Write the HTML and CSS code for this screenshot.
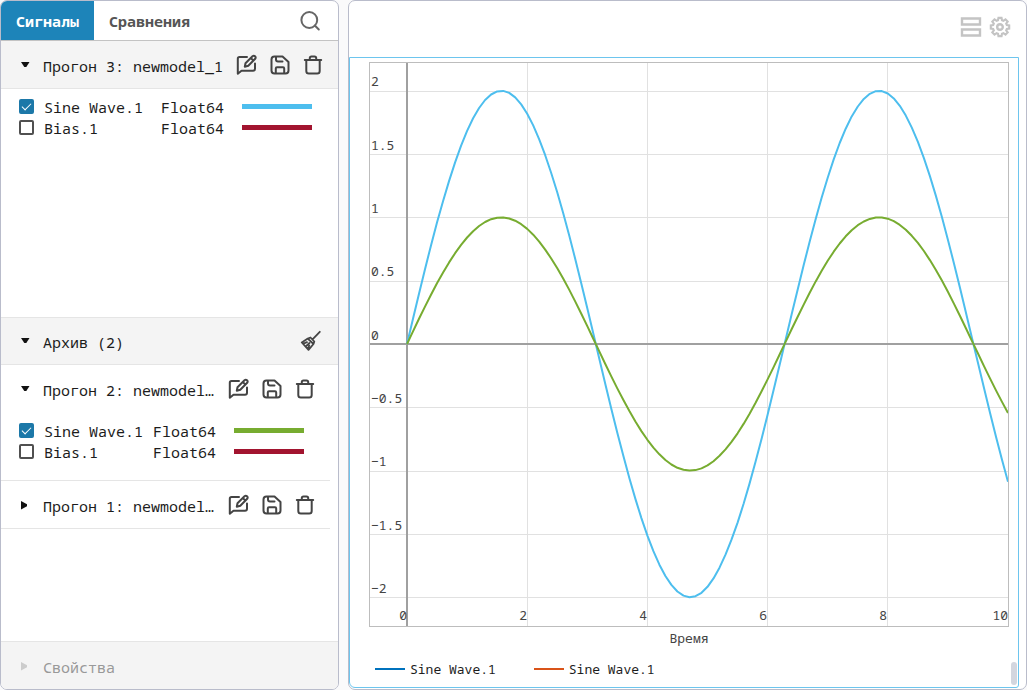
FILE: index.html
```html
<!DOCTYPE html>
<html lang="ru">
<head>
<meta charset="utf-8">
<title>Сигналы</title>
<link rel="stylesheet" href="styles.css">
</head>
<body>
<svg class="sprite" aria-hidden="true">
  <symbol id="caret-down" viewBox="0 0 10 10"><path d="M1 2h8.500L6.300 7H4.300z" fill="currentColor" stroke="none"/></symbol>
  <symbol id="caret-right" viewBox="0 0 10 10"><path d="M1 1v8.500L7 6.300V4.300z" fill="currentColor" stroke="none"/></symbol>
  <symbol id="edit" viewBox="0 0 22 22"><path d="M11 3H3.500Q1.800 3 1.800 4.700V19.700L5.500 16.800H17Q19 16.800 19 14.800V9.500M8.800 12.800L9.500 9.200L16.500 2.200Q17.800 1.200 19 2.300Q20.200 3.500 19.200 4.800L12.300 11.800ZM14.800 4L17.400 6.600"/></symbol>
  <symbol id="save" viewBox="0 0 22 22"><path d="M5.500 2.500H13.500L19.500 8V16.500Q19.500 19.500 16.500 19.500H5.500Q2.500 19.500 2.500 16.500V5.500Q2.500 2.500 5.500 2.500M7 2.800V5.500Q7 7.500 9 7.500H13.500M6.800 19.300V14.500Q6.800 13.300 8 13.300H14Q15.200 13.300 15.200 14.500V19.300"/></symbol>
  <symbol id="trash" viewBox="0 0 22 22"><path d="M2.800 6H19.200M4.300 6V17Q4.300 19.500 6.800 19.500H15.200Q17.700 19.500 17.700 17V6M7.800 5.700V4Q7.800 2.500 9.500 2.500H12.500Q14.200 2.500 14.200 4V5.700"/></symbol>
  <symbol id="broom" viewBox="0 0 22 22"><path d="M20.800 1.800L14 8.800M8.800 8.600L11.500 7.500L15.300 11.500L14.500 14L9.500 19.800L2.800 12.500L8.800 8.600L14.500 14M5 13.300L8 12.200M7.300 16L10.500 13M9 18.500L10.300 15.500"/></symbol>
  <symbol id="search" viewBox="0 0 22 22"><circle cx="10.300" cy="10" r="7.900"/><path d="M15.800 15.500L19.800 19.500"/></symbol>
</svg>

<div class="app">
  <aside class="panel sidebar">
    <nav class="tabs">
      <button class="tab tab-active" type="button">Сигналы</button>
      <button class="tab" type="button">Сравнения</button>
      <button class="icon search" type="button" aria-label="Поиск"><svg><use href="#search"/></svg></button>
    </nav>

    <section class="current">
      <header class="bar bar-grey">
        <button class="toggle" type="button" aria-expanded="true"><svg class="caret"><use href="#caret-down"/></svg><span>Прогон 3: newmodel_1</span></button>
        <button class="icon" type="button" aria-label="Изменить"><svg><use href="#edit"/></svg></button>
        <button class="icon" type="button" aria-label="Сохранить"><svg><use href="#save"/></svg></button>
        <button class="icon" type="button" aria-label="Удалить"><svg><use href="#trash"/></svg></button>
      </header>
      <div class="signals">
        <label class="signal"><input type="checkbox" checked><span class="name">Sine Wave.1</span><span>Float64</span><i class="swatch blue"></i></label>
        <label class="signal"><input type="checkbox"><span class="name">Bias.1</span><span>Float64</span><i class="swatch red"></i></label>
      </div>
    </section>

    <section class="archive">
      <header class="bar bar-grey bar-top">
        <button class="toggle" type="button" aria-expanded="true"><svg class="caret"><use href="#caret-down"/></svg><span>Архив (2)</span></button>
        <button class="icon broom" type="button" aria-label="Очистить архив"><svg><use href="#broom"/></svg></button>
      </header>
      <div class="archive-list">
        <header class="bar bar-open">
          <button class="toggle" type="button" aria-expanded="true"><svg class="caret"><use href="#caret-down"/></svg><span>Прогон 2: newmodel…</span></button>
          <button class="icon" type="button" aria-label="Изменить"><svg><use href="#edit"/></svg></button>
          <button class="icon" type="button" aria-label="Сохранить"><svg><use href="#save"/></svg></button>
          <button class="icon" type="button" aria-label="Удалить"><svg><use href="#trash"/></svg></button>
        </header>
        <div class="signals signals-line">
          <label class="signal"><input type="checkbox" checked><span class="name">Sine Wave.1</span><span>Float64</span><i class="swatch green"></i></label>
          <label class="signal"><input type="checkbox"><span class="name">Bias.1</span><span>Float64</span><i class="swatch red"></i></label>
        </div>
        <header class="bar">
          <button class="toggle" type="button" aria-expanded="false"><svg class="caret"><use href="#caret-right"/></svg><span>Прогон 1: newmodel…</span></button>
          <button class="icon" type="button" aria-label="Изменить"><svg><use href="#edit"/></svg></button>
          <button class="icon" type="button" aria-label="Сохранить"><svg><use href="#save"/></svg></button>
          <button class="icon" type="button" aria-label="Удалить"><svg><use href="#trash"/></svg></button>
        </header>
      </div>
    </section>

    <footer class="bar bar-grey bar-foot">
      <button class="toggle" type="button" disabled><svg class="caret"><use href="#caret-right"/></svg><span>Свойства</span></button>
    </footer>
  </aside>

  <main class="panel view">
    <div class="toolbar">
      <button class="icon tool" type="button" aria-label="Разметка"><svg viewBox="0 0 22 22"><path d="M2 2.500H20V8.500H2ZM2 13.500H20V19.500H2Z"/></svg></button>
      <button class="icon tool" type="button" aria-label="Настройки"><svg viewBox="0 0 22 22"><circle cx="11" cy="11" r="2.800"/><path d="M9.300 1.800h3.400l.5 2.600 1.600.7 2.300-1.600 2.400 2.400-1.600 2.300.7 1.600 2.600.5v3.400l-2.600.5-.7 1.600 1.600 2.300-2.400 2.400-2.300-1.600-1.600.7-.5 2.600H9.300l-.5-2.600-1.600-.7-2.300 1.600-2.400-2.400 1.600-2.300-.7-1.600-2.600-.5V10.300l2.600-.5.7-1.600L2.500 5.900l2.400-2.400 2.300 1.600 1.600-.7z" transform="translate(1.100 .2) scale(.9)"/></svg></button>
    </div>
    <div class="chart">
      <svg class="plot" viewBox="0 0 640 565" role="img" aria-label="Sine Wave.1">
        <path class="grid" d="M1 29.500H639M1 92.500H639M1 155.500H639M1 219.500H639M1 345.500H639M1 409.500H639M1 472.500H639M1 535.500H639M158.500 1V564M278.500 1V564M398.500 1V564M518.500 1V564"/>
        <path class="axis" d="M1 282H639M38 1V564"/>
        <g class="ticks">
          <text x="2" y="24">2</text><text x="2" y="88">1.5</text><text x="2" y="151">1</text><text x="2" y="214">0.5</text><text x="2" y="278">0</text><text x="2" y="341">−0.5</text><text x="2" y="404">−1</text><text x="2" y="468">−1.5</text><text x="2" y="531">−2</text>
        </g>
        <g class="ticks ticks-x">
          <text x="38" y="558">0</text><text x="158" y="558">2</text><text x="278" y="558">4</text><text x="398" y="558">6</text><text x="518" y="558">8</text><text x="639" y="558">10</text>
        </g>
        <path class="curve curve-blue" data-amplitude="2"/>
        <path class="curve curve-green" data-amplitude="1"/>
        <rect class="frame" x=".5" y=".5" width="639" height="564"/>
      </svg>
      <div class="axis-title">Время</div>
      <div class="legend">
        <span class="entry"><i class="key key-blue"></i>Sine Wave.1</span>
        <span class="entry"><i class="key key-orange"></i>Sine Wave.1</span>
      </div>
      <i class="thumb"></i>
    </div>
  </main>
</div>
<script src="script.js"></script>
</body>
</html>
```

FILE: styles.css
```css
* { box-sizing: border-box; }
body {
  margin: 0;
  background: #fafafb;
  color: #1c1c1c;
  font: 15px/20px "Noto Sans Mono", "DejaVu Sans Mono", monospace;
}
button {
  margin: 0;
  padding: 0;
  border: 0;
  background: none;
  color: inherit;
  font: inherit;
}
.sprite { position: absolute; width: 0; height: 0; }
.app { display: flex; gap: 9px; height: 100vh; }
.panel {
  display: flex;
  flex-direction: column;
  border: 1px solid #b9bccb;
  border-radius: 7px;
  background: #fff;
  overflow: hidden;
}
.sidebar { flex: 0 0 339px; }
.view { flex: 1; min-width: 0; }

.tabs { display: flex; align-items: center; height: 40px; border-bottom: 1px solid #c3c3c3; }
.tab { height: 39px; padding: 0 15px; color: #555; font-weight: bold; }
.tab-active { background: #1d84b9; color: #fff; }

.icon { flex: none; width: 22px; height: 22px; color: #444; }
.icon svg {
  display: block;
  width: 22px;
  height: 22px;
  fill: none;
  stroke: currentColor;
  stroke-width: 2;
  stroke-linejoin: round;
  stroke-linecap: round;
}
.search { margin: 0 17px 0 auto; color: #666; }

.bar {
  display: flex;
  align-items: center;
  gap: 11px;
  height: 48px;
  padding: 0 14px 0 19px;
  border-bottom: 1px solid #e5e5e5;
}
.bar-grey { background: #f4f4f4; }
.bar-top { border-top: 1px solid #e5e5e5; }
.bar-open { border-bottom: 0; }
.bar-foot { margin-top: auto; border-top: 1px solid #e5e5e5; border-bottom: 0; }
.toggle { display: flex; flex: 1; align-items: center; gap: 13px; min-width: 0; white-space: nowrap; }
.toggle span { padding-top: 2px; }
.toggle:disabled { color: #999; }
.toggle:disabled .caret { color: #ccc; }
.caret { flex: none; width: 10px; height: 10px; color: #111; }
.broom { margin-right: 3px; }
.broom svg { stroke-width: 1.8; }

.current { display: flex; flex-direction: column; height: 276px; }
.archive-list { padding-right: 8px; }
.signals { display: flex; flex-direction: column; padding: 7px 26px 9px 18px; }
.signals-line { height: 68px; border-bottom: 1px solid #e5e5e5; }
.signal { display: flex; align-items: center; height: 21px; }
.signal input {
  appearance: none;
  display: grid;
  place-items: center;
  width: 15px;
  height: 15px;
  margin: 0 10px 0 0;
  border: 2px solid #505050;
  border-radius: 2px;
  background: #fff;
}
.signal input:checked { border-color: #1c78a8; background: #1c78a8; }
.signal input:checked::before {
  content: "";
  width: 8px;
  height: 4px;
  margin-bottom: 3px;
  border: solid #fff;
  border-width: 0 0 1px 1px;
  transform: rotate(-45deg);
}
.name { flex: 1; }
.swatch { width: 70px; height: 5px; margin-left: 18px; }
.blue { background: #4dbeee; }
.red { background: #a2142f; }
.green { background: #77ac30; }

.toolbar { display: flex; flex: none; justify-content: flex-end; align-items: center; gap: 7px; height: 56px; padding: 0 15px 4px; }
.tool { color: #c4c4c4; }
.tool svg { stroke-width: 2.4; stroke-linejoin: miter; }

.chart {
  position: relative;
  display: flex;
  flex: 1;
  flex-direction: column;
  min-height: 0;
  margin: 0 7px 1px 0;
  padding: 4px 9px 6px 19px;
  border: 1px solid #6dc5ee;
  border-radius: 0 0 3px 6px;
  font-size: 13px;
}
.plot { display: block; flex: 1; min-height: 0; width: 100%; }
.grid { stroke: #e1e1e1; }
.axis { stroke: #a0a0a0; stroke-width: 2; }
.frame { fill: none; stroke: #bdbdbd; }
.ticks { fill: #444; font-size: 13px; }
.ticks-x { text-anchor: end; }
.curve { fill: none; stroke-width: 2; stroke-linejoin: round; }
.curve-blue { stroke: #4dbeee; }
.curve-green { stroke: #77ac30; }
.axis-title { height: 22px; color: #444; line-height: 22px; text-align: center; }
.legend { display: flex; gap: 38px; height: 32px; padding: 8px 6px 0; }
.entry { display: flex; align-items: center; gap: 5px; }
.key { width: 30px; height: 2px; }
.key-blue { background: #0072bd; }
.key-orange { background: #d95319; }
.thumb { position: absolute; right: 1px; bottom: 2px; width: 6px; height: 23px; border-radius: 3px; background: #d3d6df; }
```

FILE: script.js
```js
const origin = { x: 38, y: 282 };
const scale = { x: 60.1, y: 126.6 };
const step = 0.1;

document.querySelectorAll(".curve").forEach((curve) => {
  const amplitude = Number(curve.dataset.amplitude);
  const points = [];
  for (let i = 0; i <= 10 / step; i += 1) {
    const t = i * step;
    const x = origin.x + t * scale.x;
    const y = origin.y - amplitude * Math.sin(t) * scale.y;
    points.push(`${x.toFixed(1)} ${y.toFixed(1)}`);
  }
  curve.setAttribute("d", `M${points.join("L")}`);
});
```
